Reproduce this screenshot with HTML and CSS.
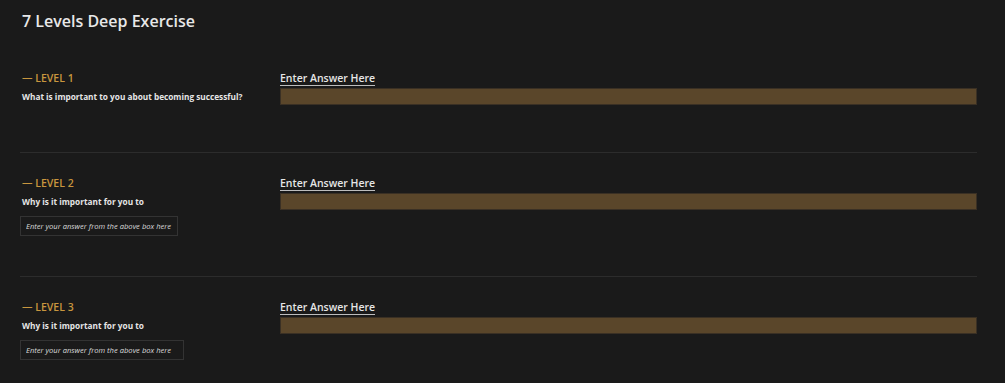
FILE: index.html
```html
<!DOCTYPE html>
<html lang="en">
<head>
<meta charset="UTF-8">
<title>7 Levels Deep Exercise</title>
<link rel="stylesheet" href="styles.css">
</head>
<body>
<div class="page">
  <h1 class="title">7 Levels Deep Exercise</h1>

  <div class="level first">
    <div class="left">
      <div class="tag">— LEVEL 1</div>
      <div class="question">What is important to you about becoming successful?</div>
    </div>
    <div class="right">
      <div class="answer-label">Enter Answer Here</div>
      <div class="answer-bar"></div>
    </div>
  </div>

  <div class="level">
    <div class="left">
      <div class="tag">— LEVEL 2</div>
      <div class="question">Why is it important for you to</div>
      <input class="prev" type="text" placeholder="Enter your answer from the above box here">
    </div>
    <div class="right">
      <div class="answer-label">Enter Answer Here</div>
      <div class="answer-bar"></div>
    </div>
  </div>

  <div class="level last">
    <div class="left">
      <div class="tag">— LEVEL 3</div>
      <div class="question">Why is it important for you to</div>
      <input class="prev wide" type="text" placeholder="Enter your answer from the above box here">
    </div>
    <div class="right">
      <div class="answer-label">Enter Answer Here</div>
      <div class="answer-bar"></div>
    </div>
  </div>
</div>
</body>
</html>
```
FILE: styles.css
```css
html, body{
  margin: 0;
  background: #1a1a1a;
  color: #e6e6e6;
  font-family: "Open Sans", "Noto Sans", sans-serif;
}
.page{
  padding: 8px 28px 0 20px;
}
.title{
  margin: 0 0 0 2px;
  font-size: 16px;
  font-weight: 600;
  line-height: 26px;
  color: #e8e8e8;
}
/* level rows */
.level{
  display: grid;
  grid-template-columns: 260px 1fr;
  padding: 23px 0 40px;
  border-bottom: 1px solid #2c2c2c;
}
.level.first{padding: 37px 0 47px;}
.level.last{border-bottom: none;}
.left{padding-left: 2px;}
.tag{
  font-size: 10.5px;
  line-height: 14px;
  font-weight: 600;
  color: #c8963e;
}
.question{
  margin-top: 6px;
  font-size: 8.25px;
  line-height: 12px;
  font-weight: 700;
  color: #e6e6e6;
}
.prev{
  display: block;
  margin: 8px 0 0 -2px;
  width: 158px;
  height: 20px;
  box-sizing: border-box;
  padding: 0 5px;
  background: #1a1a1a;
  border: 1px solid #333;
  color: #ddd;
  font-family: inherit;
  font-size: 7.6px;
  font-style: italic;
  outline: none;
}
.prev.wide{width: 164px;}
.prev::placeholder{color: #dadada;}
/* answer column */
.right{
  display: flex;
  flex-direction: column;
  align-items: flex-start;
}
.answer-label{
  font-size: 10.5px;
  line-height: 14px;
  font-weight: 600;
  color: #e6e6e6;
  border-bottom: 1px solid #bdbdbd;
}
.answer-bar{
  align-self: stretch;
  margin-top: 2px;
  height: 15px;
  background: #5a462a;
  border: 1px solid #3a3024;
}
```
